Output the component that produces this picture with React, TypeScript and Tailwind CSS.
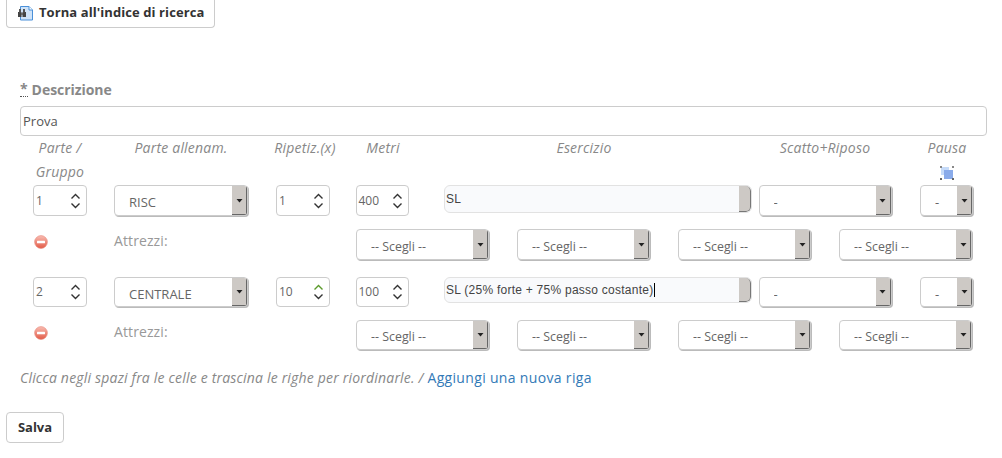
const COLS = "grid grid-cols-[80px_162px_82px_76px_332px_146px_98px]";

function Caret() {
  return (
    <svg className="h-[5px] w-[7px]" viewBox="0 0 7 5">
      <path d="M0.5 1h6L3.5 4.5z" fill="#222" />
    </svg>
  );
}

function Select({ value, className, textSize = "text-[13px]" }: { value: string; className: string; textSize?: string }) {
  return (
    <div className={`flex shrink-0 items-stretch overflow-hidden rounded-[4px] border border-[#ccc] bg-white shadow-[1px_1px_0_#bbb] ${className}`}>
      <span className={`flex min-w-0 flex-1 items-center truncate pt-[5px] text-[#666] ${textSize}`}>{value}</span>
      <span className="flex w-[15px] items-center justify-center border-r border-b border-r-[#666] border-b-[#666] bg-[#cdc9c5]">
        <Caret />
      </span>
    </div>
  );
}

function NumberBox({ value, size, active }: { value: string; size: string; active?: boolean }) {
  return (
    <div className={`flex items-center justify-between rounded-[4px] border border-[#ccc] bg-white pr-[4px] pl-[2px] text-[12px] text-[#666] ${size}`}>
      <span>{value}</span>
      <svg className="h-[20px] w-[13px]" viewBox="0 0 13 20" fill="none" strokeWidth="1.4">
        <path d="M2.5 7.5l4-4 4 4" stroke={active ? "#5a9a2a" : "#333"} />
        <path d="M2.5 12.5l4 4 4-4" stroke="#333" />
      </svg>
    </div>
  );
}

function Exercise({ text, focused, className }: { text: string; focused?: boolean; className: string }) {
  return (
    <div className={`flex w-[308px] items-stretch overflow-hidden rounded-[6px] border border-[#e2e2e2] bg-[#f9fafc] ${className}`}>
      <span className="flex flex-1 items-center pl-[1px] font-['Liberation_Sans',sans-serif] text-[12px] tracking-[0.25px] text-[#444]">
        {text}
        {focused && <span className="ml-[1px] h-[14px] w-px bg-black" />}
      </span>
      <span className="w-[12px] rounded-r-[5px] border-r border-b border-r-[#777] border-b-[#777] bg-[#cdc9c5]" />
    </div>
  );
}

function MinusIcon() {
  return (
    <svg className="mt-[6px] ml-[14px] h-[14px] w-[14px]" viewBox="0 0 14 14">
      <defs>
        <linearGradient id="minus" x1="0" y1="0" x2="0" y2="1">
          <stop offset="0" stopColor="#f9bdb3" />
          <stop offset="1" stopColor="#e25a46" />
        </linearGradient>
      </defs>
      <circle cx="7" cy="7" r="6.4" fill="url(#minus)" stroke="#e88a7c" strokeWidth="0.6" />
      <rect x="3" y="5.8" width="8" height="2.4" rx="0.5" fill="#fff" />
    </svg>
  );
}

function BackIcon() {
  return (
    <svg className="h-[16px] w-[16px]" viewBox="0 0 16 16">
      <path d="M2.5 1.5h8.5l3.5 3.5v10h-12z" fill="#cfe3f8" stroke="#4a90d9" />
      <path d="M11 1.5v3.5h3.5" fill="#fff" stroke="#4a90d9" />
      <rect x="0" y="7" width="3.5" height="5" fill="#444" />
      <rect x="4.5" y="7" width="3.5" height="5" fill="#444" />
      <rect x="1" y="4" width="2" height="3.5" fill="#555" />
      <rect x="5" y="4" width="2" height="3.5" fill="#555" />
      <rect x="3" y="8" width="2" height="2" fill="#666" />
    </svg>
  );
}

function GroupIcon() {
  return (
    <svg className="h-[16px] w-[16px]" viewBox="0 0 16 16">
      <rect x="2" y="2" width="8" height="8" fill="#c6dbf9" />
      <rect x="5" y="5" width="9" height="9" fill="#8aabea" />
      <rect x="1" y="1" width="2" height="2" fill="#888" />
      <rect x="13" y="1" width="2" height="2" fill="#888" />
      <rect x="1" y="13" width="2" height="2" fill="#666" />
      <rect x="13" y="13" width="2" height="2" fill="#666" />
    </svg>
  );
}

function Row({ part, section, reps, metres, exercise, focused, active, height, exerciseHeight, gap }: {
  part: string; section: string; reps: string; metres: string; exercise: string; focused?: boolean; active?: boolean;
  height: string; exerciseHeight: string; gap: string;
}) {
  return (
    <>
      <div className={`${COLS} items-start`}>
        <div className="flex justify-center"><NumberBox value={part} size={`w-[54px] ${height}`} /></div>
        <div className="flex justify-center">
          <Select value={section} className={`w-[134px] pl-[14px] ${height}`} />
        </div>
        <div className="flex justify-center"><NumberBox value={reps} active={active} size={`w-[54px] ${height}`} /></div>
        <div className="flex justify-center"><NumberBox value={metres} size={`w-[53px] ${height}`} /></div>
        <div className="flex justify-end"><Exercise text={exercise} focused={focused} className={exerciseHeight} /></div>
        <div className="flex justify-center">
          <Select value="-" className={`w-[133px] pl-[14px] ${height}`} />
        </div>
        <div className="flex justify-center pr-[1px]">
          <Select value="-" className={`w-[53px] pl-[14px] ${height}`} />
        </div>
      </div>
      <div className={`${COLS} mt-[13px] ${gap} items-start`}>
        <div><MinusIcon /></div>
        <div className="pl-[14px] text-[14px] leading-[24px] tracking-[0.1px] text-[#999]">Attrezzi:</div>
        <div className="col-span-4 col-start-4 flex gap-[28px] pl-[12px]">
          <Select value="-- Scegli --" textSize="text-[12.4px]" className={`w-[133px] pl-[14px] ${height}`} />
          <Select value="-- Scegli --" textSize="text-[12.4px]" className={`w-[133px] pl-[14px] ${height}`} />
          <Select value="-- Scegli --" textSize="text-[12.4px]" className={`w-[133px] pl-[14px] ${height}`} />
          <Select value="-- Scegli --" textSize="text-[12.4px]" className={`w-[133px] pl-[14px] ${height}`} />
        </div>
      </div>
    </>
  );
}

export default function App() {
  return (
    <div className="h-[458px] w-[1002px] overflow-hidden bg-white font-['Open_Sans',sans-serif] text-[#555]">
      <div className="pl-[6px]">
        <button className="flex h-[28px] w-[209px] items-center gap-[5px] rounded-b-[4px] border border-t-0 border-[#ccc] bg-white pb-[2px] pl-[11px] text-[13px] tracking-[0.08px] font-bold text-[#333]">
          <BackIcon />
          Torna all'indice di ricerca
        </button>
      </div>

      <div className="pt-[52px] pl-[20px]">
        <label className="flex h-[19px] items-center gap-[4px] text-[14px] font-bold tracking-[-0.05px] text-[#888]">
          <span className="border-b border-dotted border-[#555] leading-[14px]">*</span>
          Descrizione
        </label>
        <input
          className="mt-[7px] block h-[30px] w-[967px] rounded-[4px] border border-[#ccc] bg-white px-[2px] text-[13px] text-[#555] outline-none"
          defaultValue="Prova"
        />

        <div className={`${COLS} mt-0 text-center text-[14px] leading-[24px] tracking-[0.2px] italic text-[#888]`}>
          <div>Parte /<br />Gruppo</div>
          <div>Parte allenam.</div>
          <div className="pl-[4px]">Ripetiz.(x)</div>
          <div className="pl-[2px]">Metri</div>
          <div className="pr-[4px]">Esercizio</div>
          <div>Scatto+Riposo</div>
          <div>
            Pausa
            <div className="box-border flex h-[24px] items-center justify-center pt-[2px]"><GroupIcon /></div>
          </div>
        </div>

        <div className="mt-[1px]">
          <Row part="1" section="RISC" reps="1" metres="400" exercise="SL" height="h-[31px]" exerciseHeight="h-[28px]" gap="mb-[17px]" />
          <Row part="2" section="CENTRALE" reps="10" metres="100" exercise="SL (25% forte + 75% passo costante)" focused active height="h-[30px]" exerciseHeight="h-[26px]" gap="mb-[17px]" />
        </div>

        <p className="text-[14px] leading-[22px] text-[#888]">
          <em className="tracking-[0.19px]">Clicca negli spazi fra le celle e trascina le righe per riordinarle. / </em>
          <a className="tracking-[0.33px] text-[#337ab7]" href="#">Aggiungi una nuova riga</a>
        </p>
      </div>

      <div className="mt-[23px] pl-[6px]">
        <button className="h-[31px] w-[58px] rounded-[4px] border border-[#ccc] bg-white text-[13px] font-bold text-[#333]">Salva</button>
      </div>
    </div>
  );
}
